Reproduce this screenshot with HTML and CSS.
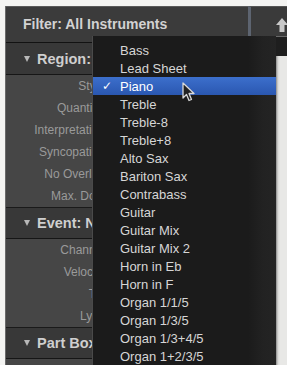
FILE: index.html
```html
<!DOCTYPE html>
<html>
<head>
<meta charset="utf-8">
<link rel="stylesheet" href="styles.css">
</head>
<body>
<div class="app">
  <div class="inspector">
    <div class="filter">Filter: All Instruments</div>
    <div class="sec-head first"><span class="tri"></span><span class="sec-title">Region: Piano</span></div>
    <div class="props">
      <div class="prop">Style</div>
      <div class="prop">Quantize</div>
      <div class="prop">Interpretation</div>
      <div class="prop">Syncopation</div>
      <div class="prop">No Overlap</div>
      <div class="prop">Max. Dots</div>
    </div>
    <div class="sec-head"><span class="tri"></span><span class="sec-title">Event: Note</span></div>
    <div class="props">
      <div class="prop">Channel</div>
      <div class="prop">Velocity</div>
      <div class="prop">Tie</div>
      <div class="prop">Lyric</div>
    </div>
    <div class="sec-head"><span class="tri"></span><span class="sec-title">Part Box</span></div>
  </div>
  <div class="side">
    <div class="tab">
      <svg class="up" width="14" height="16" viewBox="0 0 14 16"><path d="M7 1 L13 8 L9.5 8 L9.5 15 L4.5 15 L4.5 8 L1 8 Z" fill="#c8c8c8"/></svg>
    </div>
    <div class="side-dark"></div>
    <div class="side-light"></div>
  </div>
  <div class="menu">
    <div class="item"><span class="mark"></span><span>Bass</span></div>
    <div class="item"><span class="mark"></span><span>Lead Sheet</span></div>
    <div class="item sel"><span class="mark">✓</span><span>Piano</span></div>
    <div class="item"><span class="mark"></span><span>Treble</span></div>
    <div class="item"><span class="mark"></span><span>Treble-8</span></div>
    <div class="item"><span class="mark"></span><span>Treble+8</span></div>
    <div class="item"><span class="mark"></span><span>Alto Sax</span></div>
    <div class="item"><span class="mark"></span><span>Bariton Sax</span></div>
    <div class="item"><span class="mark"></span><span>Contrabass</span></div>
    <div class="item"><span class="mark"></span><span>Guitar</span></div>
    <div class="item"><span class="mark"></span><span>Guitar Mix</span></div>
    <div class="item"><span class="mark"></span><span>Guitar Mix 2</span></div>
    <div class="item"><span class="mark"></span><span>Horn in Eb</span></div>
    <div class="item"><span class="mark"></span><span>Horn in F</span></div>
    <div class="item"><span class="mark"></span><span>Organ 1/1/5</span></div>
    <div class="item"><span class="mark"></span><span>Organ 1/3/5</span></div>
    <div class="item"><span class="mark"></span><span>Organ 1/3+4/5</span></div>
    <div class="item"><span class="mark"></span><span>Organ 1+2/3/5</span></div>
  </div>
  <svg class="cursor" width="14" height="21" viewBox="0 0 14 21"><path d="M1 1 L1 16 L4.5 12.5 L7 18.5 L9.5 17.5 L7 11.5 L12 11.5 Z" fill="#222" stroke="#d8d8d8" stroke-width="1.3" stroke-linejoin="round"/></svg>
</div>
</body>
</html>
```

FILE: styles.css
```css
html, body {
  margin: 0;
  padding: 0;
  height: 365px;
  overflow: hidden;
  background: #f4f4f2;
  font-family: "Liberation Sans", Arial, sans-serif;
}
.app {
  position: relative;
  display: flex;
  margin: 6px 0 0 5px;
  height: 359px;
}
.inspector {
  width: 242px;
  background: #464646;
  border-left: 1px solid #6a6a6a;
  display: flex;
  flex-direction: column;
}
.filter {
  height: 35px;
  border-top: 1px solid #5a5a5a;
  border-bottom: 1px solid #121212;
  background: #3b3b3b;
  color: #d2d2d2;
  font-weight: bold;
  font-size: 14px;
  line-height: 35px;
  padding-left: 17px;
  white-space: nowrap;
}
.sec-head {
  height: 30px;
  border-top: 1px solid #1a1a1a;
  border-bottom: 1px solid #161616;
  background: #383838;
  color: #cfcfcf;
  font-weight: bold;
  font-size: 14.5px;
  line-height: 30px;
  padding-left: 18px;
  display: flex;
  align-items: center;
  white-space: nowrap;
}
.sec-head.first {
  border-top: none;
  height: 31px;
}
.sec-title {
  width: 55px;
  overflow: hidden;
}
.tri {
  width: 0;
  height: 0;
  border-left: 3.5px solid transparent;
  border-right: 3.5px solid transparent;
  border-top: 6px solid #b8b8b8;
  margin-right: 7px;
}
.props {
  display: flex;
  flex-direction: column;
  width: 86px;
  overflow: hidden;
}
.prop {
  height: 22px;
  line-height: 22px;
  width: 99px;
  flex: none;
  text-align: right;
  font-size: 12px;
  color: #9a9a9a;
  white-space: nowrap;
}
.side {
  flex: 1;
  display: flex;
  flex-direction: column;
}
.tab {
  height: 29px;
  border-left: 3px solid #5d6470;
  border-top: 1px solid #555;
  background: #3a3a3a;
  position: relative;
  overflow: hidden;
}
.up {
  position: absolute;
  left: 24px;
  top: 10px;
}
.side-dark {
  height: 19px;
  background: #1e1e1e;
  border-top: 1px solid #6a6a6a;
}
.side-light {
  flex: 1;
  background: linear-gradient(to right, #262626 0, #262626 27px, #8a8a8a 28px, #d8d8d6 30px, #e8e8e6 32px);
}
.menu {
  position: absolute;
  left: 87px;
  top: 30px;
  width: 184px;
  height: 340px;
  background: linear-gradient(to right, #1b1b1b 0, #1b1b1b 155px, #222 170px, #242424 184px);
  border-left: 1px solid #4a4a4a;
  padding-top: 5px;
  box-sizing: border-box;
}
.item {
  display: flex;
  align-items: center;
  height: 18px;
  font-size: 13px;
  color: #d6d6d6;
  white-space: nowrap;
}
.item.sel {
  background: linear-gradient(#3c6fcc, #2a57b0);
  color: #ffffff;
}
.mark {
  width: 18px;
  margin-left: 9px;
  font-size: 12px;
  font-family: "DejaVu Sans", sans-serif;
}
.cursor {
  position: absolute;
  left: 177px;
  top: 76px;
}
```
